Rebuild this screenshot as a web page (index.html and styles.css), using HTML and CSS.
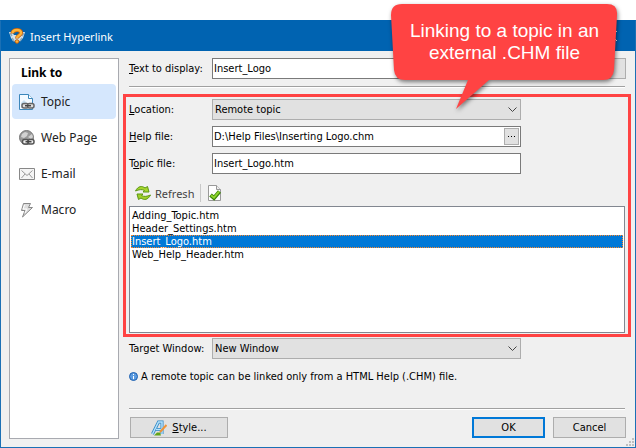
FILE: index.html
```html
<!DOCTYPE html>
<html lang="en">
<head>
    <meta charset="UTF-8">
    <meta name="viewport" content="width=device-width, initial-scale=1.0">
    <title>Insert Hyperlink</title>
    <link rel="stylesheet" href="styles.css">
</head>
<body>

    <div class="dialog">
        <header class="titlebar">
            <svg width="16" height="16" viewBox="0 0 16 16">
                <path d="M0 4l3 0 2 3h6l2-3 3 0-2 6-3 3-3 1-4-1-2-3z" fill="#d9e3ea"/>
                <path d="M1 5l2 3M15 5l-2 3M3 10l2 3M13 10l-2 3" stroke="#8fa9b9" stroke-width="1.500"/>
                <path d="M3.500 5.500C3.500 1 12.500 1 12 5c0 2.500-4 2.500-4 5.500" fill="none" stroke="#c4610f" stroke-width="4"/>
                <path d="M3.500 5C4 1 12.500 1 12 5c0 2.500-4 2.500-4 5" fill="none" stroke="#ffb43a" stroke-width="2.500"/>
                <circle cx="8" cy="13.500" r="1.800" fill="#ffb43a" stroke="#c4610f"/>
            </svg>
            <span class="title">Insert Hyperlink</span>
            <button class="close" aria-label="Close">
                <svg width="10" height="10" viewBox="0 0 10 10"><path d="M0 0l10 10M10 0L0 10" stroke="#fff"/></svg>
            </button>
        </header>

        <div class="content">
            <nav class="sidebar">
                <h2>Link to</h2>
                <a class="active" href="#topic">
                    <svg width="16" height="16" viewBox="0 0 16 16">
                        <path d="M0.500 0.500h9l4 4v11h-13z" fill="#f4faff" stroke="#3c87bb"/>
                        <path d="M9.500 0.500v4h4" fill="#fff" stroke="#3c87bb"/>
                        <path d="M2 9l3-3 4 4v4H2z" fill="#c4def0"/>
                        <rect x="3" y="9.500" width="6.500" height="4.500" rx="2" fill="#ddd" stroke="#666" stroke-width="1.500"/>
                        <rect x="8.500" y="9.500" width="6.500" height="4.500" rx="2" fill="#ddd" stroke="#666" stroke-width="1.500"/>
                        <path d="M6 11.700h6" stroke="#444" stroke-width="1.500"/>
                    </svg>
                    Topic
                </a>
                <a href="#web">
                    <svg width="16" height="16" viewBox="0 0 16 16">
                        <circle cx="7.500" cy="7.500" r="7" fill="#999" stroke="#777"/>
                        <path d="M3 4l3-2 3 1-1 3-3 2-3-1zM9 7l4-3 1 3-2 2z" fill="#d2d2d2"/>
                        <rect x="3.500" y="9.500" width="6" height="4.500" rx="2" fill="#eee" stroke="#555" stroke-width="1.500"/>
                        <rect x="9" y="9.500" width="6" height="4.500" rx="2" fill="#eee" stroke="#555" stroke-width="1.500"/>
                        <path d="M6.500 11.700h6" stroke="#444" stroke-width="1.500"/>
                    </svg>
                    Web Page
                </a>
                <a href="#email">
                    <svg width="16" height="16" viewBox="0 0 16 16">
                        <path d="M0.500 2.500h15v11H0.500z" fill="#f5f5f5" stroke="#888"/>
                        <path d="M2.500 4.500l5.500 5 5.500-5M2.500 12l3.500-4M13.500 12L10 8" fill="none" stroke="#999"/>
                    </svg>
                    E-mail
                </a>
                <a href="#macro">
                    <svg width="16" height="16" viewBox="0 0 16 16">
                        <path d="M4.500 1.500h7L9.500 5.500h4L3.500 15l2.500-6.500H2.500z" fill="#ddd" stroke="#888"/>
                        <path d="M5.500 3L4 7h4L6 11" fill="none" stroke="#fff"/>
                    </svg>
                    Macro
                </a>
            </nav>

            <main class="main">
                <div class="row display-row">
                    <label for="display-text"><u>T</u>ext to display:</label>
                    <input type="text" id="display-text" value="Insert_Logo">
                    <button class="btn" aria-label="Insert field"></button>
                </div>
                <hr>

                <section class="remote">
                    <div class="row">
                        <label for="location"><u>L</u>ocation:</label>
                        <div class="field">
                            <select id="location"><option>Remote topic</option></select>
                            <svg class="arrow" width="9" height="6" viewBox="0 0 9 6"><path d="M0.500 0.500l4 4 4-4" fill="none" stroke="#444"/></svg>
                        </div>
                    </div>
                    <div class="row">
                        <label for="help-file"><u>H</u>elp file:</label>
                        <div class="field">
                            <input type="text" id="help-file" value="D:\Help Files\Inserting Logo.chm">
                            <button class="browse" aria-label="Browse">
                                <svg width="7" height="1" viewBox="0 0 7 1"><path d="M0 0h1v1H0zM3 0h1v1H3zM6 0h1v1H6z"/></svg>
                            </button>
                        </div>
                    </div>
                    <div class="row">
                        <label for="topic-file">T<u>o</u>pic file:</label>
                        <div class="field">
                            <input type="text" id="topic-file" value="Insert_Logo.htm">
                        </div>
                    </div>

                    <div class="toolbar">
                        <button>
                            <svg width="16" height="16" viewBox="0 0 16 16">
                                <path d="M0.500 6C3 1 7 0.500 10 3l2.500-1.500L14 7H8l1.500-1.500C7 4 4 4.500 0.500 6z" fill="#a6d62c" stroke="#5b9614"/>
                                <path d="M15.500 10C13 15 9 15.500 6 13l-2.500 1.500L2 9h6l-1.500 1.500C9 12 12 11.500 15.500 10z" fill="#a0d028" stroke="#5b9614"/>
                            </svg>
                            Refresh
                        </button>
                        <span class="divider"></span>
                        <button aria-label="Validate">
                            <svg width="16" height="16" viewBox="0 0 16 16">
                                <path d="M1.500 0.500h8l4 4v11h-12z" fill="#fff" stroke="#999"/>
                                <path d="M9.500 0.500v4h4" fill="#eee" stroke="#999"/>
                                <path d="M3.500 10l3.500 3 5.500-6.500" fill="none" stroke="#3d8408" stroke-width="4"/>
                                <path d="M4 10.200l3 2.500 5-6" fill="none" stroke="#8ed52c" stroke-width="2"/>
                            </svg>
                        </button>
                    </div>

                    <ul class="topics" role="listbox" aria-label="Topics">
                        <li role="option">Adding_Topic.htm</li>
                        <li role="option">Header_Settings.htm</li>
                        <li role="option" class="selected" aria-selected="true">Insert_Logo.htm</li>
                        <li role="option">Web_Help_Header.htm</li>
                    </ul>
                </section>

                <div class="row">
                    <label for="target">Target Window:</label>
                    <div class="field">
                        <select id="target"><option>New Window</option></select>
                        <svg class="arrow" width="9" height="6" viewBox="0 0 9 6"><path d="M0.500 0.500l4 4 4-4" fill="none" stroke="#444"/></svg>
                    </div>
                </div>
                <p class="info">
                    <svg width="9" height="9" viewBox="0 0 9 9">
                        <circle cx="4.500" cy="4.500" r="4" fill="#5b9be0" stroke="#1d5fae"/>
                        <path d="M4 2h1v1H4zM4 4h1v3H4z" fill="#fff"/>
                    </svg>
                    A remote topic can be linked only from a HTML Help (.CHM) file.
                </p>
                <hr>

                <footer class="buttons">
                    <button class="btn style-btn">
                        <svg width="16" height="16" viewBox="0 0 16 16">
                            <path d="M1.500 14L7.500 2H11v12M5 9.500h6" fill="none" stroke="#2f86c4" stroke-width="3"/>
                            <path d="M1.500 14L7.500 2H11v12M5 9.500h6" fill="none" stroke="#b5e2fb" stroke-width="1.500"/>
                            <path d="M15.500 5L9 12" stroke="#ee9338" stroke-width="2"/>
                            <path d="M3 15.500l3-3 3 0 1 3z" fill="#63a51a"/>
                        </svg>
                        <span><u>S</u>tyle...</span>
                    </button>
                    <button class="btn default">OK</button>
                    <button class="btn">Cancel</button>
                </footer>
            </main>
        </div>

        <svg class="grip" width="8" height="8" viewBox="0 0 8 8">
            <path d="M6 0h2v2H6zM3 3h2v2H3zM6 3h2v2H6zM0 6h2v2H0zM3 6h2v2H3zM6 6h2v2H6z" fill="#bfbfbf"/>
        </svg>
    </div>

    <div class="callout">
        <svg width="227" height="108" viewBox="0 0 227 108">
            <path d="M11 0H216Q227 0 226 11L223 66Q222 76 212 76H98L65 105L77 76H14Q4 76 3 66L0 11Q0 0 11 0Z" fill="#ff4343"/>
        </svg>
        <p>Linking to a topic in an<br>external .CHM file</p>
    </div>

</body>
</html>
```
FILE: styles.css
```css
/* Global Styles */
* {
    box-sizing: border-box;
}

body {
    margin: 0;
    padding-top: 20px;
    min-height: 100vh;
    display: flex;
    background: #fff;
    color: #000;
    font-family: "DejaVu Sans Condensed", Tahoma, sans-serif;
    font-size: 11px;
    position: relative;
}

button,
input,
select {
    font: inherit;
    color: inherit;
    margin: 0;
    border-radius: 0;
}

svg {
    display: block;
    flex: none;
}

hr {
    margin: 0 6px;
    border: 0;
    height: 2px;
    background: #fff;
    border-top: 1px solid #a0a0a0;
}

/* Window */
.dialog {
    flex: 1;
    display: flex;
    flex-direction: column;
    position: relative;
    background: #f0f0f0;
    border: 1px solid #1b70b5;
    border-top-color: #0063b1;
}

.titlebar {
    height: 30px;
    display: flex;
    align-items: center;
    gap: 5px;
    padding: 0 18px 0 8px;
    background: #0063b1;
    color: #fff;
    font-family: "Noto Sans", sans-serif;
    font-size: 11px;
}

.title {
    flex: 1;
}

.close {
    padding: 0;
    border: 0;
    background: none;
}

.content {
    flex: 1;
    display: flex;
    gap: 4px;
    padding: 7px 4px 8px 8px;
}

/* Sidebar */
.sidebar {
    width: 110px;
    padding: 2px;
    background: #fff;
    border: 1px solid #a8aab0;
    font-family: "Noto Sans", sans-serif;
    font-size: 12px;
}

.sidebar h2 {
    margin: 0;
    padding-left: 9px;
    font-size: 12px;
    line-height: 23px;
}

.sidebar a {
    display: flex;
    align-items: center;
    gap: 6px;
    height: 35px;
    margin-bottom: 1px;
    padding-left: 7px;
    border-radius: 4px;
    color: #222;
    text-decoration: none;
}

.sidebar .active {
    background: #d5e7fd;
}

/* Form */
.main {
    flex: 1;
    display: flex;
    flex-direction: column;
}

.row {
    display: flex;
    align-items: center;
    padding: 0 6px;
}

.row label {
    width: 83px;
    flex: none;
}

.display-row {
    margin-bottom: 7px;
    padding-right: 5px;
}

.display-row input {
    flex: 1;
}

.display-row .btn {
    width: 73px;
    margin-left: 8px;
}

.field {
    position: relative;
    flex: 0 1 309px;
}

input,
select {
    width: 100%;
    height: 21px;
    padding: 0 1px;
    border: 1px solid #7a7a7a;
    background: #fff;
}

select {
    appearance: none;
    padding: 0 2px;
    border-color: #adadad;
    background: #e1e1e1;
}

.arrow {
    position: absolute;
    top: 8px;
    right: 4px;
    pointer-events: none;
}

.browse {
    position: absolute;
    top: 2px;
    right: 2px;
    width: 15px;
    height: 17px;
    padding: 0 3px;
    border: 1px solid #adadad;
    background: #e1e1e1;
}

.remote {
    flex: 1;
    display: flex;
    flex-direction: column;
    margin: 6px 0 1px;
    padding: 2px 3px 1px;
    border: 3px solid #ff4343;
}

.remote .row {
    padding: 0;
    margin-bottom: 6px;
}

.toolbar {
    display: flex;
    align-items: center;
    gap: 6px;
    height: 26px;
    padding-left: 6px;
}

.toolbar button {
    display: flex;
    align-items: center;
    gap: 4px;
    padding: 0;
    border: 0;
    background: none;
    color: #444;
    font-family: "Noto Sans", sans-serif;
    font-size: 11px;
}

.divider {
    width: 1px;
    height: 18px;
    background: #c8c8c8;
}

.topics {
    flex: 1;
    margin: 0;
    padding: 2px 1px;
    list-style: none;
    background: #fff;
    border: 1px solid #828790;
}

.topics li {
    height: 13px;
    padding: 0 1px;
    line-height: 13px;
}

.topics .selected {
    background: #0078d7;
    color: #fff;
    outline: 1px dotted #ff8728;
    outline-offset: -1px;
}

.info {
    display: flex;
    align-items: center;
    gap: 3px;
    margin: 8px 6px 22px;
    line-height: 19px;
}

/* Buttons */
.buttons {
    display: flex;
    gap: 8px;
    padding: 7px 5px 1px 7px;
}

.btn {
    display: flex;
    align-items: center;
    justify-content: center;
    gap: 5px;
    width: 73px;
    height: 21px;
    padding: 0;
    border: 1px solid #adadad;
    background: #e1e1e1;
}

.style-btn {
    width: 98px;
    margin-right: auto;
}

.default {
    border: 2px solid #0078d7;
}

.grip {
    position: absolute;
    right: 1px;
    bottom: 1px;
}

/* Callout */
.callout {
    position: absolute;
    top: 4px;
    right: 18px;
    width: 227px;
    color: #fff;
    font-family: "Liberation Sans", Arial, sans-serif;
    font-size: 19px;
    line-height: 22px;
    text-align: center;
}

.callout svg {
    filter: drop-shadow(1px 2px 2px rgba(0, 0, 0, 0.5));
}

.callout p {
    position: absolute;
    top: 16px;
    left: 0;
    right: 0;
    margin: 0;
}
```
